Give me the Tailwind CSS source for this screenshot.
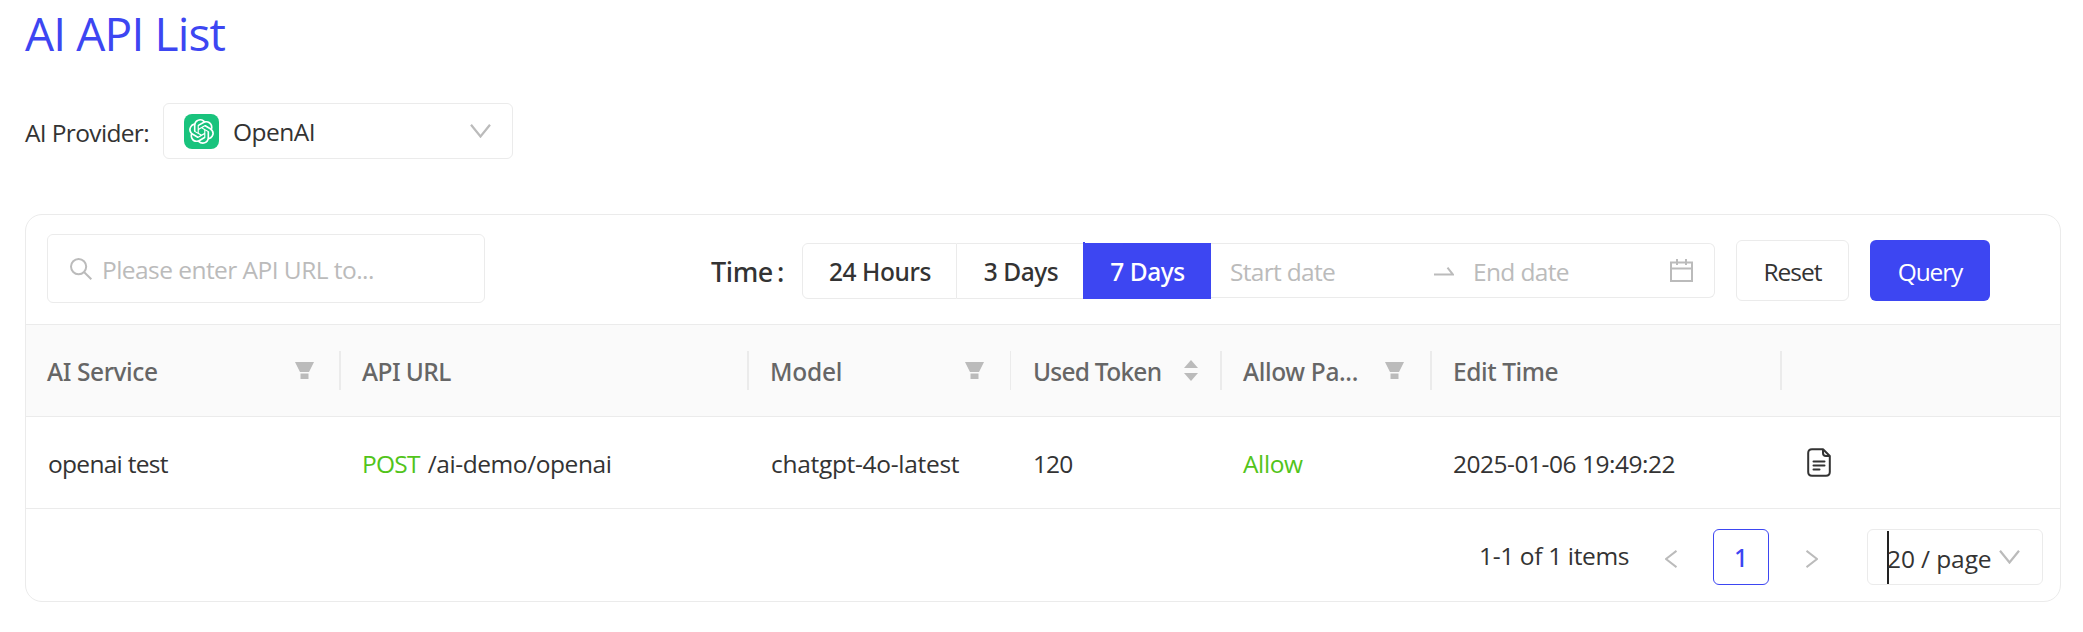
<!DOCTYPE html>
<html lang="en">
<head>
<meta charset="utf-8">
<title>AI API List</title>
<script src="https://cdn.jsdelivr.net/npm/@tailwindcss/browser@4"></script>
</head>
<body class="h-[632px] w-[2083px] overflow-hidden bg-white font-['Open_Sans','Noto_Sans',sans-serif] text-[24.5px] leading-[32px] whitespace-nowrap text-[#333]">
<svg class="hidden">
  <symbol id="filter" viewBox="0 0 19 17"><path d="M0 0h19l-5 10H5z M5.5 11.5h8V17h-8z" fill="#bbb"/></symbol>
  <symbol id="down" viewBox="0 0 21 14"><path d="M1 .7L10.5 12.500 20 .7" fill="none" stroke="#bbb" stroke-width="2.2"/></symbol>
</svg>
<main class="pl-[25px]">
  <h1 class="pt-[3px] text-[46px] leading-[60px] tracking-[-.85px] text-[#3d46f2]">AI API List</h1>

  <div class="mt-[40px] flex h-[56px] items-center">
    <span class="w-[138px] pt-[3px] tracking-[-.65px]">AI Provider:</span>
    <div class="flex h-[56px] w-[350px] items-center rounded-md border border-[#ebebeb] pr-[21px] pl-[20px]">
      <span class="flex size-[35px] items-center justify-center rounded-[8px] bg-[#19c37d]">
        <svg class="size-[25px]" viewBox="0 0 24 24" fill="#fff"><path d="M22.2819 9.8211a5.9847 5.9847 0 0 0-.5157-4.9108 6.0462 6.0462 0 0 0-6.5098-2.9A6.0651 6.0651 0 0 0 4.9807 4.1818a5.9847 5.9847 0 0 0-3.9977 2.9 6.0462 6.0462 0 0 0 .7427 7.0966 5.98 5.98 0 0 0 .511 4.9107 6.051 6.051 0 0 0 6.5146 2.9001A5.9847 5.9847 0 0 0 13.2599 24a6.0557 6.0557 0 0 0 5.7718-4.2058 5.9894 5.9894 0 0 0 3.9977-2.9001 6.0557 6.0557 0 0 0-.7475-7.0729zm-9.022 12.6081a4.4755 4.4755 0 0 1-2.8764-1.0408l.1419-.0804 4.7783-2.7582a.7948.7948 0 0 0 .3927-.6813v-6.7369l2.02 1.1686a.071.071 0 0 1 .038.052v5.5826a4.504 4.504 0 0 1-4.4945 4.4944zm-9.6607-4.1254a4.4708 4.4708 0 0 1-.5346-3.0137l.142.0852 4.783 2.7582a.7712.7712 0 0 0 .7806 0l5.8428-3.3685v2.3324a.0804.0804 0 0 1-.0332.0615L9.74 19.9502a4.4992 4.4992 0 0 1-6.1408-1.6464zM2.3408 7.8956a4.485 4.485 0 0 1 2.3655-1.9728V11.6a.7664.7664 0 0 0 .3879.6765l5.8144 3.3543-2.0201 1.1685a.0757.0757 0 0 1-.071 0l-4.8303-2.7865A4.504 4.504 0 0 1 2.3408 7.872zm16.5963 3.8558L13.1038 8.364 15.1192 7.2a.0757.0757 0 0 1 .071 0l4.8303 2.7913a4.4944 4.4944 0 0 1-.6765 8.1042v-5.6772a.79.79 0 0 0-.407-.667zm2.0107-3.0231l-.142-.0852-4.7735-2.7818a.7759.7759 0 0 0-.7854 0L9.409 9.2297V6.8974a.0662.0662 0 0 1 .0284-.0615l4.8303-2.7866a4.4992 4.4992 0 0 1 6.6802 4.66zM8.3065 12.863l-2.02-1.1638a.0804.0804 0 0 1-.038-.0567V6.0742a4.4992 4.4992 0 0 1 7.3757-3.4537l-.142.0805L8.704 5.459a.7948.7948 0 0 0-.3927.6813zm1.0976-2.3654l2.602-1.4998 2.6069 1.4998v2.9994l-2.5974 1.4997-2.6067-1.4997Z"/></svg>
      </span>
      <span class="ml-[14px] pt-px tracking-[-.5px]">OpenAI</span>
      <svg class="ml-auto h-[14px] w-[21px]"><use href="#down"/></svg>
    </div>
  </div>

  <section class="mt-[55px] h-[388px] w-[2036px] overflow-hidden rounded-[17px] border border-[#ebebeb]">
    <div class="flex h-[109px] items-start">
      <div class="mt-[19px] ml-[21px] flex h-[69px] w-[438px] items-center rounded-md border border-[#ebebeb] pl-[22px] text-[#bbb]">
        <svg class="size-[22px]" viewBox="0 0 22 22" fill="none" stroke="#bbb" stroke-width="2"><circle cx="8.6" cy="8.6" r="7.6"/><path d="M14 14l7.3 7.3"/></svg>
        <span class="ml-[10px] pt-[2px] tracking-[-.55px]">Please enter API URL to...</span>
      </div>

      <div class="mt-[29px] ml-[226px] flex h-[56px] w-[91px] items-center font-['Noto_Sans'] text-[27px] font-medium"><span class="tracking-[-.4px]">Time</span><span class="ml-[4px]">:</span></div>
      <div class="mt-[28px] flex h-[56px] font-['Noto_Sans'] font-medium">
        <div class="flex w-[155px] items-center justify-center rounded-l-md border border-[#ebebeb] pt-px pl-px tracking-[-.4px]">24 Hours</div>
        <div class="flex w-[126px] items-center justify-center border-y border-[#ebebeb] pt-px pl-[2px] tracking-[-.45px]">3 Days</div>
        <div class="relative flex w-[128px] items-center justify-center bg-[#3d46f2] pt-px pl-px tracking-[-.45px] text-white"><i class="absolute -top-px left-0 h-px w-[2px] bg-[#3d46f2]"></i>7 Days</div>
      </div>
      <div class="mt-[28px] flex h-[55px] w-[504px] items-center rounded-r-md border border-l-0 border-[#ebebeb] pt-[2px] pr-[21px] text-[#bbb]">
        <span class="w-[223px] pl-[19px] tracking-[-.7px]">Start date</span>
        <svg class="h-[9px] w-[20px]" viewBox="0 0 20 9" fill="none" stroke="#bbb" stroke-width="2"><path d="M0 7.5h19L13.5 .7"/></svg>
        <span class="ml-[19px] tracking-[-.65px]">End date</span>
        <svg class="-mt-[3px] ml-auto size-[23px]" viewBox="0 0 23 23" fill="none" stroke="#bbb" stroke-width="2"><path d="M1 3.5h21v18.5H1z M1 9.5h21 M7 0v6 M16 0v6"/></svg>
      </div>
      <div class="mt-[25px] ml-[21px] flex h-[61px] w-[113px] items-center justify-center rounded-md border border-[#ebebeb] pt-[2px] tracking-[-1px]">Reset</div>
      <div class="mt-[25px] ml-[21px] flex h-[61px] w-[120px] items-center justify-center rounded-md bg-[#3d46f2] pt-[2px] tracking-[-1.1px] text-white">Query</div>
    </div>

    <div class="grid h-[93px] grid-cols-[315px_408px_262px_211px_210px_350px_1fr] border-y border-[#ebebeb] bg-[#fafafa] font-['Noto_Sans'] font-medium text-[#666]">
      <div class="flex items-center pl-[21px]"><span class="pt-[3px] tracking-[-.4px]">AI Service</span><svg class="mr-[25px] ml-auto h-[17px] w-[19px]"><use href="#filter"/></svg><i class="h-[39px] w-[2px] bg-[#ebebeb]"></i></div>
      <div class="flex items-center pl-[21px]"><span class="pt-[3px] tracking-[-.55px]">API URL</span><i class="ml-auto h-[39px] w-[2px] bg-[#ebebeb]"></i></div>
      <div class="flex items-center pl-[21px]"><span class="pt-[3px] tracking-[-.25px]">Model</span><svg class="mr-[26px] ml-auto h-[17px] w-[19px]"><use href="#filter"/></svg><i class="h-[39px] w-px bg-[#ebebeb]"></i></div>
      <div class="flex items-center pl-[22px]"><span class="pt-[3px] tracking-[-.75px]">Used Token</span><svg class="mr-[22px] ml-auto h-[21px] w-[14px]" viewBox="0 0 14 21" fill="#bbb"><path d="M0 8L7 0l7 8z M0 13l7 8 7-8z"/></svg><i class="h-[39px] w-[2px] bg-[#ebebeb]"></i></div>
      <div class="flex items-center pl-[21px]"><span class="pt-[3px] tracking-[-.35px]">Allow Pa...</span><svg class="mr-[26px] ml-auto h-[17px] w-[19px]"><use href="#filter"/></svg><i class="h-[39px] w-[2px] bg-[#ebebeb]"></i></div>
      <div class="flex items-center pl-[21px]"><span class="pt-[3px] tracking-[-.4px]">Edit Time</span><i class="ml-auto h-[39px] w-[2px] bg-[#ebebeb]"></i></div>
      <div></div>
    </div>

    <div class="grid h-[92px] grid-cols-[315px_408px_262px_211px_210px_350px_1fr] items-center border-b border-[#ebebeb]">
      <div class="pt-[3px] pl-[22px] tracking-[-.7px]">openai test</div>
      <div class="flex pt-[3px] pl-[21px]"><span class="tracking-[-.75px] text-[#52c41a]">POST</span><span class="ml-[8px] tracking-[-.43px]">/ai-demo/openai</span></div>
      <div class="pt-[3px] pl-[22px] tracking-[-.3px]">chatgpt-4o-latest</div>
      <div class="pt-[3px] pl-[22px] tracking-[-.9px]">120</div>
      <div class="pt-[3px] pl-[21px] tracking-[-.4px] text-[#52c41a]">Allow</div>
      <div class="pt-[3px] pl-[21px] tracking-[-.48px]">2025-01-06 19:49:22</div>
      <div class="pl-[25px]"><svg class="h-[29px] w-[24px]" viewBox="0 0 24 29" fill="none" stroke="#333" stroke-width="2" stroke-linejoin="round" stroke-linecap="round"><path d="M16 1.2H5Q1.2 1.2 1.2 5v19q0 3.8 3.800 3.800h14q3.800 0 3.800-3.800V8L16 1.200V5q0 3 3 3h3.800M6.500 13.500h11M6.500 17.500h11M6.500 21.500h6"/></svg></div>
    </div>

    <div class="flex h-[92px] items-start pt-[20px]">
      <span class="ml-[1453px] w-[186px] pt-[11px] tracking-[-.35px]">1-1 of 1 items</span>
      <svg class="mt-[21px] h-[18px] w-[12px]" viewBox="0 0 12 18" fill="none" stroke="#bbb" stroke-width="2"><path d="M11.500 .8L1 9l10.500 8.200"/></svg>
      <div class="ml-[36px] flex size-[56px] items-center justify-center rounded-md border border-[#3d46f2] pt-px font-['Noto_Sans'] font-medium text-[#3d46f2]">1</div>
      <svg class="mt-[21px] ml-[37px] h-[18px] w-[12px]" viewBox="0 0 12 18" fill="none" stroke="#bbb" stroke-width="2"><path d="M.5 .8L11 9 .5 17.200"/></svg>
      <div class="ml-[49px] flex h-[56px] w-[176px] items-center rounded-md border border-[#ebebeb] pl-[19px]">
        <i class="h-[53px] w-[2px] bg-[#222]"></i>
        <span class="-ml-[2px] pt-[3px] tracking-[-.1px]">20 / page</span>
        <svg class="ml-[7px] h-[14px] w-[21px]"><use href="#down"/></svg>
      </div>
    </div>
  </section>
</main>
</body>
</html>
